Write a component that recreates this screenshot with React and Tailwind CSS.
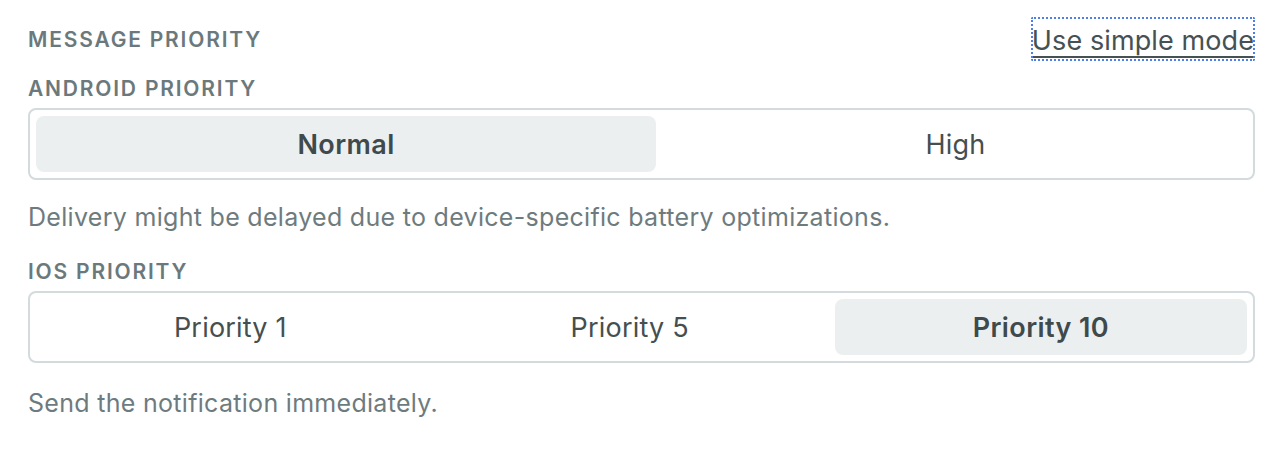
import { useState } from 'react';

const font = { fontFamily: 'Inter, "Noto Sans", sans-serif' };

function Segmented({ options, value, onChange }) {
  return (
    <div className="flex gap-2 p-[6px] border-2 border-[#d3dbdd] rounded-lg bg-white">
      {options.map((opt) => {
        const active = opt === value;
        return (
          <button
            key={opt}
            onClick={() => onChange(opt)}
            className={
              active
                ? 'flex-auto h-14 pt-[3px] rounded-lg bg-[#ebeff0] text-[27px] tracking-[0.4px] font-semibold text-[#3f4a4c]'
                : 'flex-auto h-14 pt-[3px] rounded-lg text-[27px] tracking-[0.2px] font-normal text-[#454f51]'
            }
          >
            {opt}
          </button>
        );
      })}
    </div>
  );
}

export default function App() {
  const [android, setAndroid] = useState('Normal');
  const [ios, setIos] = useState('Priority 10');

  const androidHelp = {
    Normal: 'Delivery might be delayed due to device-specific battery optimizations.',
    High: 'Deliver the message immediately and wake the device.',
  };
  const iosHelp = {
    'Priority 1': 'Prioritize the device\u2019s power considerations.',
    'Priority 5': 'Send the notification based on power considerations.',
    'Priority 10': 'Send the notification immediately.',
  };

  return (
    <div className="min-h-screen bg-white pl-[28px] pr-[23px] pt-[17px]" style={font}>
      {/* Header */}
      <div className="flex justify-between items-start">
        <h2 className="mt-[10px] text-[21px] font-semibold tracking-[1.8px] text-[#6b797c] uppercase leading-[26px]">
          Message Priority
        </h2>
        <button className="px-[1px] h-[44px] outline-2 outline-dotted outline-[#4f7fe6] -outline-offset-2 rounded-[2px] text-[27px] tracking-[0.1px] text-[#465153] underline decoration-2 underline-offset-[6px] leading-[47px]">
          Use simple mode
        </button>
      </div>

      {/* Android */}
      <h3 className="mt-[15px] text-[21px] font-semibold tracking-[1.8px] text-[#6b797c] uppercase leading-[26px]">
        Android Priority
      </h3>
      <div className="mt-[6px]">
        <Segmented options={['Normal', 'High']} value={android} onChange={setAndroid} />
      </div>
      <p className="mt-[22px] text-[25px] tracking-[0.3px] text-[#6e7b7e] leading-[30px]">{androidHelp[android]}</p>

      {/* iOS */}
      <h3 className="mt-[27px] text-[21px] font-semibold tracking-[1.8px] text-[#6b797c] uppercase leading-[26px]">
        iOS Priority
      </h3>
      <div className="mt-[6px]">
        <Segmented options={['Priority 1', 'Priority 5', 'Priority 10']} value={ios} onChange={setIos} />
      </div>
      <p className="mt-[25px] text-[25px] tracking-[0.3px] text-[#6e7b7e] leading-[30px]">{iosHelp[ios]}</p>
    </div>
  );
}
